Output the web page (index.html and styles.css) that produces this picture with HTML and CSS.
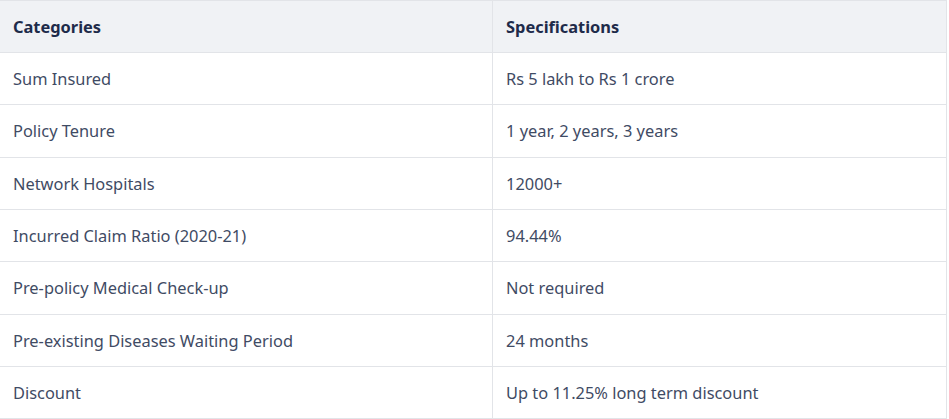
FILE: index.html
```html
<!DOCTYPE html>
<html lang="en">
<head>
<meta charset="utf-8">
<title>Policy Specifications</title>
<link rel="stylesheet" href="styles.css">
</head>
<body>
<table class="spec-table">
  <thead>
    <tr>
      <th class="col-cat">Categories</th>
      <th class="col-spec">Specifications</th>
    </tr>
  </thead>
  <tbody>
    <tr><td class="col-cat">Sum Insured</td><td class="col-spec">Rs 5 lakh to Rs 1 crore</td></tr>
    <tr><td class="col-cat">Policy Tenure</td><td class="col-spec">1 year, 2 years, 3 years</td></tr>
    <tr><td class="col-cat">Network Hospitals</td><td class="col-spec">12000+</td></tr>
    <tr><td class="col-cat">Incurred Claim Ratio (2020-21)</td><td class="col-spec">94.44%</td></tr>
    <tr><td class="col-cat">Pre-policy Medical Check-up</td><td class="col-spec">Not required</td></tr>
    <tr><td class="col-cat">Pre-existing Diseases Waiting Period</td><td class="col-spec">24 months</td></tr>
    <tr><td class="col-cat">Discount</td><td class="col-spec">Up to 11.25% long term discount</td></tr>
  </tbody>
</table>
</body>
</html>
```

FILE: styles.css
```css
html, body {
  margin: 0;
  padding: 0;
  background: #ffffff;
}

body {
  font-family: "Noto Sans", "Open Sans", sans-serif;
  font-size: 16.4px;
  color: #3f4b64;
}

.spec-table {
  width: 947px;
  border-collapse: separate;
  border-spacing: 0;
  border-top: 1px solid #e2e4e8;
  border-right: 1px solid #e2e4e8;
  table-layout: fixed;
}

.spec-table th,
.spec-table td {
  text-align: left;
  padding: 0 13px;
  line-height: 51.33px;
  border-bottom: 1px solid #e2e4e8;
  white-space: nowrap;
}

.spec-table thead th {
  line-height: 51px;
  background: #f0f2f5;
  color: #1e2b4a;
  font-weight: 700;
}

.spec-table .col-cat {
  width: 466px;
  border-right: 1px solid #e2e4e8;
}
```
